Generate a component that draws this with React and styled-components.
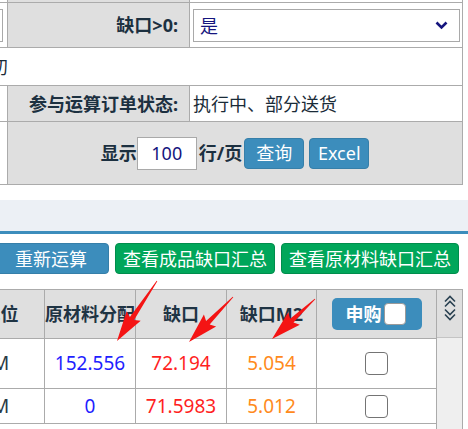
import React from "react";
import styled, { createGlobalStyle } from "styled-components";

const GlobalStyle = createGlobalStyle`
  html, body { margin: 0; padding: 0; background: #fff; }
  body { font-family: "Noto Sans", "Noto Sans CJK SC", sans-serif; }
  * { box-sizing: border-box; }
`;

const Viewport = styled.div`
  position: relative;
  width: 468px;
  height: 429px;
  overflow: hidden;
  background: #fff;
`;

const Page = styled.div`
  width: 568px;
  margin-left: -100px;
  margin-top: -39px;
  font-size: 18px;
  line-height: 1;
  color: #1a2b38;
`;

/* ---------- filter form ---------- */
const FormGrid = styled.div`
  display: grid;
  grid-template-columns: 106px 181px 272px;
  grid-template-rows: 40px 44px 37px 35px 62px;
  gap: 1px;
  padding: 1px;
  width: 563px;
  background: #ababab;
`;

const Cell = styled.div`
  display: flex;
  align-items: center;
  min-width: 0;
  background: ${(p) => (p.$gray ? "#dfdfdf" : "#fff")};
  grid-column: ${(p) => p.$span || "auto"};
  justify-content: ${(p) => p.$justify || "flex-start"};
  padding: ${(p) => p.$pad || "0"};
  white-space: nowrap;
  overflow: hidden;
`;

const Label = styled(Cell).attrs({ $gray: true, $justify: "flex-end" })`
  padding-right: 11px;
  font-weight: 700;
  color: #1c3040;
`;

const TextBox = styled.div`
  height: 33px;
  border: 1px solid #a9a9a9;
  background: #fff;
  width: ${(p) => p.$w || "auto"};
  flex: ${(p) => (p.$grow ? 1 : "none")};
  margin: ${(p) => p.$m || "0"};
  display: flex;
  align-items: center;
  justify-content: ${(p) => p.$justify || "flex-start"};
  padding: ${(p) => p.$pad || "0"};
  color: #15157e;
  font-weight: 400;
`;

const Chevron = styled.svg`
  flex: none;
`;

const PagerLine = styled.div`
  display: flex;
  align-items: center;
  font-weight: 700;
  color: #1c3040;
`;

const Button = styled.button`
  height: ${(p) => p.$h || 31}px;
  width: ${(p) => (p.$w ? `${p.$w}px` : "auto")};
  padding: 0 ${(p) => p.$pad ?? 7}px;
  border-radius: 4px;
  border: 1px solid ${(p) => (p.$tone === "green" ? "#008d4c" : "#367fa9")};
  background: ${(p) => (p.$tone === "green" ? "#00a65a" : "#3c8dbc")};
  color: #fff;
  font-family: "Noto Sans", "Noto Sans CJK SC", sans-serif;
  font-size: 18px;
  font-weight: 400;
  line-height: 1;
  white-space: nowrap;
  flex: none;
  margin: ${(p) => p.$m || "0"};
`;

/* ---------- tab strip ---------- */
const Spacer = styled.div`
  height: ${(p) => p.$h}px;
`;

const TabStrip = styled.div`
  height: 34px;
  background: #ecf0f5;
  border-bottom: 3px solid #3c8dbc;
`;

const ActionRow = styled.div`
  display: flex;
  gap: 6px;
  padding-left: 93px;
  height: 31px;
`;

/* ---------- result table ---------- */
const ResultArea = styled.div`
  display: flex;
  align-items: flex-start;
`;

const ResultGrid = styled.div`
  display: grid;
  grid-template-columns: 55px 87px 90px 90px 89px 119px;
  grid-template-rows: 48px 49px 34px;
  gap: 1px;
  padding: 1px;
  width: 537px;
  background: #ababab;
`;

const HeadCell = styled.div`
  background: #dfdfdf;
  display: flex;
  align-items: center;
  justify-content: center;
  font-weight: 700;
  color: #1f3444;
  white-space: nowrap;
  min-width: 0;
`;

const DataCell = styled.div`
  background: #fff;
  display: flex;
  align-items: center;
  justify-content: center;
  white-space: nowrap;
  min-width: 0;
  font-size: 19px;
  color: ${(p) => p.$color || "#2a3a46"};
`;

const HeadToggle = styled.div`
  width: 90px;
  height: 32px;
  border-radius: 5px;
  background: #3c8dbc;
  color: #fff;
  font-weight: 700;
  display: flex;
  align-items: center;
  gap: 2px;
  padding-left: 14px;
`;

const Box = styled.span`
  display: inline-block;
  width: ${(p) => p.$s}px;
  height: ${(p) => p.$s}px;
  border-radius: 4px;
  background: #fff;
  border: ${(p) => (p.$light ? "1px solid #9a9a9a" : "1.5px solid #747474")};
`;

const Rail = styled.div`
  width: 27px;
  margin-left: -1px;
  border: 1px solid #ababab;
  border-bottom: none;
  display: flex;
  flex-direction: column;
`;

const RailHead = styled.div`
  height: 48px;
  background: #dfdfdf;
  border-bottom: 1px solid #c4c4c4;
  display: flex;
  justify-content: center;
  padding-top: 5px;
`;

const RailBody = styled.div`
  height: 120px;
  background: #efefef;
`;

const Overlay = styled.svg`
  position: absolute;
  left: 0;
  top: 0;
  pointer-events: none;
`;

/* red callout arrow: tail point to tip point */
function arrowPoints(tx, ty, hx, hy) {
  const dx = hx - tx;
  const dy = hy - ty;
  const len = Math.hypot(dx, dy);
  const ux = dx / len;
  const uy = dy / len;
  const nx = -uy;
  const ny = ux;
  const headLen = 27;
  const headW = 8.5;
  const shaftW = 2.5;
  const tailW = 0.4;
  const bx = hx - ux * headLen;
  const by = hy - uy * headLen;
  const pts = [
    [tx + nx * tailW, ty + ny * tailW],
    [bx + nx * shaftW, by + ny * shaftW],
    [bx - ux * 3 + nx * headW, by - uy * 3 + ny * headW],
    [hx, hy],
    [bx - ux * 3 - nx * headW, by - uy * 3 - ny * headW],
    [bx - nx * shaftW, by - ny * shaftW],
    [tx - nx * tailW, ty - ny * tailW],
  ];
  return pts.map((p) => p.map((v) => v.toFixed(1)).join(",")).join(" ");
}

const arrows = [
  [157, 281, 117, 341],
  [233, 297, 189, 342],
  [315, 299, 272, 339],
];

const rows = [
  { unit: "M", alloc: "152.556", gap: "72.194", m2: "5.054" },
  { unit: "M", alloc: "0", gap: "71.5983", m2: "5.012" },
];

export default function App() {
  return (
    <>
      <GlobalStyle />
      <Viewport>
        <Page>
          <FormGrid>
            <Cell />
            <Label />
            <Cell />

            <Cell $justify="flex-end">
              <TextBox $w="80px" $m="6px 4px 5px 0" />
            </Cell>
            <Label>缺口&gt;0:</Label>
            <Cell>
              <TextBox $grow $m="6px 2px 5px 3px" $pad="0 11px 0 6px" $justify="space-between">
                <span>是</span>
                <Chevron width="13" height="9" viewBox="0 0 13 9">
                  <path d="M1.5 1.5 L6.5 6.5 L11.5 1.5" fill="none" stroke="#15157e" strokeWidth="2.6" />
                </Chevron>
              </TextBox>
            </Cell>

            <Cell $span="1 / 4" $pad="0 0 0 53px">按期初</Cell>

            <Cell />
            <Label>参与运算订单状态:</Label>
            <Cell $pad="0 0 0 3px">执行中、部分送货</Cell>

            <Cell />
            <Cell $gray $span="2 / 4" $justify="center">
              <PagerLine>
                显示
                <TextBox $w="60px" $justify="center" $m="0 2px 0 0">
                  100
                </TextBox>
                行/页
                <Button $w={60} $pad={0} $m="0 0 0 2px">查询</Button>
                <Button $w={60} $pad={0} $m="0 0 0 5px">Excel</Button>
              </PagerLine>
            </Cell>
          </FormGrid>

          <Spacer $h={15} />
          <TabStrip />
          <Spacer $h={9} />

          <ActionRow>
            <Button $w={116} $pad={0}>重新运算</Button>
            <Button $tone="green">查看成品缺口汇总</Button>
            <Button $tone="green">查看原材料缺口汇总</Button>
          </ActionRow>

          <Spacer $h={15} />

          <ResultArea>
            <ResultGrid>
              <HeadCell />
              <HeadCell>单位</HeadCell>
              <HeadCell>原材料分配</HeadCell>
              <HeadCell>缺口</HeadCell>
              <HeadCell>缺口M2</HeadCell>
              <HeadCell>
                <HeadToggle>
                  申购
                  <Box $s={22} $light />
                </HeadToggle>
              </HeadCell>

              {rows.map((r, i) => (
                <React.Fragment key={i}>
                  <DataCell />
                  <DataCell>{r.unit}</DataCell>
                  <DataCell $color="#1f1fff">{r.alloc}</DataCell>
                  <DataCell $color="#ff1f1f">{r.gap}</DataCell>
                  <DataCell $color="#ff8a1c">{r.m2}</DataCell>
                  <DataCell>
                    <Box $s={23} />
                  </DataCell>
                </React.Fragment>
              ))}
            </ResultGrid>

            <Rail>
              <RailHead>
                <svg width="14" height="26" viewBox="0 0 14 26">
                  <path
                    d="M2 6.5 L7 1.5 L12 6.5 M2 11.5 L7 6.5 L12 11.5 M2 14.5 L7 19.5 L12 14.5 M2 19.5 L7 24.5 L12 19.5"
                    fill="none"
                    stroke="#2b4252"
                    strokeWidth="1.6"
                  />
                </svg>
              </RailHead>
              <RailBody />
            </Rail>
          </ResultArea>
        </Page>

        <Overlay width="468" height="429" viewBox="0 0 468 429">
          {arrows.map((a, i) => (
            <polygon key={i} points={arrowPoints(...a)} fill="#f41414" />
          ))}
        </Overlay>
      </Viewport>
    </>
  );
}
